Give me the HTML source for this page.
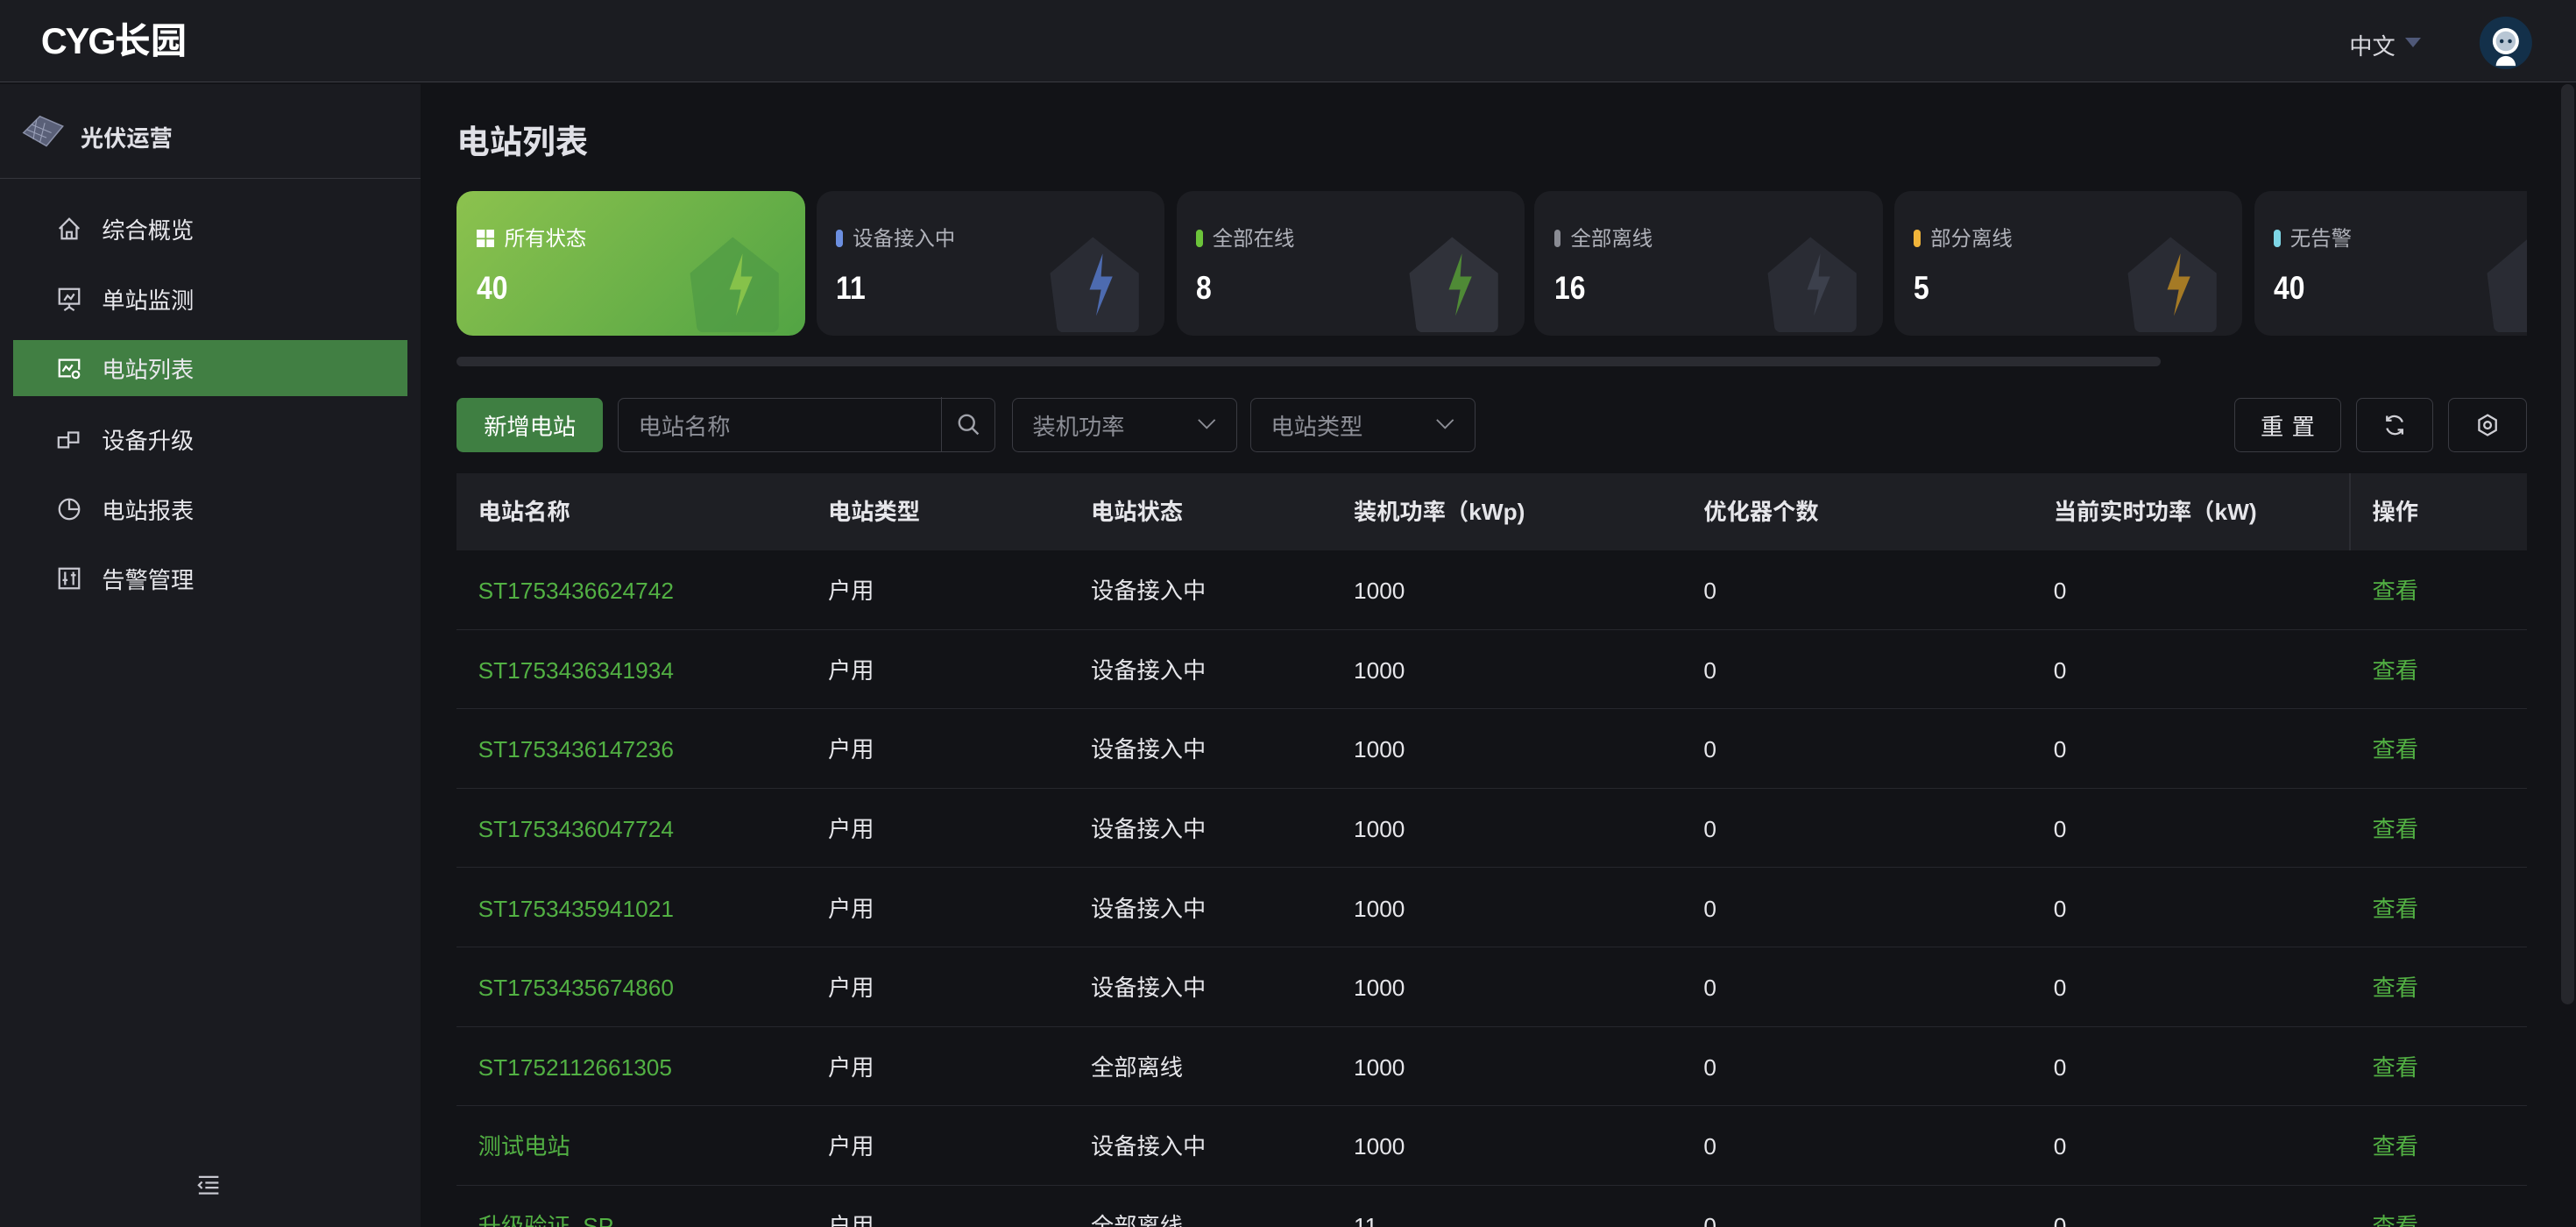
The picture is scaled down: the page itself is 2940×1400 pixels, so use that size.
<!DOCTYPE html>
<html><head><meta charset="utf-8"><style>
*{margin:0;padding:0;box-sizing:border-box}
html,body{width:2940px;height:1400px;overflow:hidden;background:#121317}
#r{zoom:1.875;width:1568px;height:747px;position:relative;font-family:"Liberation Sans","Noto Sans CJK SC",sans-serif;color:#e6e6ea;font-size:14px;background:#121317;overflow:hidden}
.a{position:absolute}
.top{left:0;top:0;width:1568px;height:50px;background:#1b1c21;border-bottom:1px solid #3b3c42}
.side{left:0;top:51px;width:256px;height:696px;background:#1a1b20}
.mi{left:34px;height:20px;display:flex;align-items:center;gap:12px;font-size:14px;color:#e8e8ec}
.card{top:116px;width:212px;height:88px;border-radius:10px;background:#1d1e23;overflow:hidden}
.card .l{position:absolute;left:12px;top:21px;font-size:12.5px;line-height:16px;color:#b0b2ba;display:flex;align-items:center;gap:6px}
.card .l i{display:inline-block;width:4px;height:11px;border-radius:2px}
.card .n{position:absolute;left:12px;top:47px;font-size:20px;line-height:24px;font-weight:bold;color:#fff;transform:scaleX(.85);transform-origin:left}
.card .hs{position:absolute;left:138px;top:24px}
.box{border:1px solid #3a3b42;border-radius:4px;height:33px;top:242px;display:flex;align-items:center;color:#8c8e96;font-size:14px}
.th{top:288px;left:278px;width:1260px;height:47px;background:#1e1f24}
.row{left:278px;width:1260px;height:48.3px;border-bottom:1px solid #26272d}
.c{position:absolute;font-size:14px;line-height:20px;height:20px;display:flex;align-items:center}
</style></head><body><div id="r">
<div class="a top">
 <div class="a" style="left:25px;top:11px;font-size:22px;line-height:28px;font-weight:bold;color:#fff;letter-spacing:-1px">CYG<span style="letter-spacing:0">长园</span></div>
 <div class="a" style="left:1430px;top:17px;font-size:14px;color:#d8d8de">中文</div>
 <div class="a" style="left:1464px;top:23px;width:0;height:0;border-left:5px solid transparent;border-right:5px solid transparent;border-top:6px solid #4f5878"></div>
 <svg class="a" style="left:1508px;top:9px" width="34" height="34" viewBox="0 0 34 34"><circle cx="17" cy="17" r="16" fill="#13304a"/><circle cx="17" cy="16" r="8" fill="#fff"/><ellipse cx="17" cy="16" rx="6" ry="6" fill="#b8c6d4"/><circle cx="14.5" cy="16" r="1.2" fill="#13304a"/><circle cx="19.5" cy="16" r="1.2" fill="#13304a"/><path d="M11 31a6 6 0 0 1 12 0z" fill="#fff"/></svg>
</div>
<div class="a side">
 <svg class="a" style="left:12px;top:18px" width="28" height="24" viewBox="0 0 28 24"><path d="M2 12L12 2l14 6-10 12z" fill="#5a6078" stroke="#8a90a8" stroke-width=".8"/><path d="M7 7l12 5M4 10l12 5M10 4l-2 12M15 6l-3 12" stroke="#9aa0b8" stroke-width=".6"/></svg>
 <div class="a" style="left:49px;top:22px;font-size:14px;font-weight:bold;color:#e0e0e6">光伏运营</div>
 <div class="a" style="left:0;top:57px;width:256px;height:1px;background:#34353b"></div>
 <div class="a" style="left:8px;top:156px;width:240px;height:34px;background:#417f43"></div>
 <div class="a mi" style="top:78px"><svg width="16" height="16" viewBox="0 0 16 16" fill="none" stroke="#c8c8d0" stroke-width="1.2"><path d="M2 8L8 2l6 6M3.5 7v7h9V7M6.5 14v-4h3v4"/></svg>综合概览</div>
 <div class="a mi" style="top:121px"><svg width="16" height="16" viewBox="0 0 16 16" fill="none" stroke="#c8c8d0" stroke-width="1.2"><rect x="2" y="2" width="12" height="9"/><path d="M5 9l2-3 2 2 2-3M8 11v2M5 15l3-2 3 2"/></svg>单站监测</div>
 <div class="a mi" style="top:163px"><svg width="16" height="16" viewBox="0 0 16 16" fill="none" stroke="#fff" stroke-width="1.2"><path d="M9 13H2V3h12v6"/><path d="M4 10l2-3 2 2 2-3"/><circle cx="12" cy="12" r="2"/></svg>电站列表</div>
 <div class="a mi" style="top:206px"><svg width="16" height="16" viewBox="0 0 16 16" fill="none" stroke="#c8c8d0" stroke-width="1.2"><rect x="1.5" y="7" width="6" height="6"/><rect x="7.5" y="4" width="6" height="6"/></svg>设备升级</div>
 <div class="a mi" style="top:249px"><svg width="16" height="16" viewBox="0 0 16 16" fill="none" stroke="#c8c8d0" stroke-width="1.2"><circle cx="8" cy="8" r="6"/><path d="M8 2v6h6"/></svg>电站报表</div>
 <div class="a mi" style="top:291px"><svg width="16" height="16" viewBox="0 0 16 16" fill="none" stroke="#c8c8d0" stroke-width="1.2"><rect x="2" y="2" width="12" height="12"/><path d="M5.5 4v8M10.5 4v8M4 9h3M9 6h3"/></svg>告警管理</div>
 <svg class="a" style="left:120px;top:664px" width="14" height="12" viewBox="0 0 14 12" stroke="#c8c8d0" stroke-width="1.2"><path d="M1 1h12M5 4.5h8M5 7.5h8M1 11h12"/><path d="M3 4L1 6l2 2" fill="none"/></svg>
</div>
<div class="a" style="left:278px;top:70px;font-size:20px;font-weight:bold;color:#e0e0e6">电站列表</div>

<div class="a card" style="left:278px;background:linear-gradient(135deg,#8cc24e,#52a444)">
 <div class="l" style="color:#fff"><svg width="11" height="11" viewBox="0 0 11 11" fill="#fff"><rect width="5" height="5"/><rect x="6" width="5" height="5"/><rect y="6" width="5" height="5"/><rect x="6" y="6" width="5" height="5"/></svg>所有状态</div>
 <div class="n">40</div>
 <svg class="hs" width="64" height="62" viewBox="0 0 64 62"><path d="M4 26L30 4l28 22v32a4 4 0 0 1-4 4H12a4 4 0 0 1-4-4z" fill="#4f9a44" opacity=".7"/><path d="M36 14l-8 22h7l-3 16 10-24h-7z" fill="#86c24a"/></svg>
</div>
<div class="a card" style="left:497px"><div class="l"><i style="background:#6c8fe0"></i>设备接入中</div><div class="n">11</div><svg class="hs" width="64" height="62" viewBox="0 0 64 62"><path d="M4 26L30 4l28 22v32a4 4 0 0 1-4 4H12a4 4 0 0 1-4-4z" fill="#2a2c34"/><path d="M36 14l-8 22h7l-3 16 10-24h-7z" fill="#4d6bb0"/></svg></div>
<div class="a card" style="left:716px"><div class="l"><i style="background:#6cc43a"></i>全部在线</div><div class="n">8</div><svg class="hs" width="64" height="62" viewBox="0 0 64 62"><path d="M4 26L30 4l28 22v32a4 4 0 0 1-4 4H12a4 4 0 0 1-4-4z" fill="#30323a"/><path d="M36 14l-8 22h7l-3 16 10-24h-7z" fill="#4f8a36"/></svg></div>
<div class="a card" style="left:934px"><div class="l"><i style="background:#8a8c94"></i>全部离线</div><div class="n">16</div><svg class="hs" width="64" height="62" viewBox="0 0 64 62"><path d="M4 26L30 4l28 22v32a4 4 0 0 1-4 4H12a4 4 0 0 1-4-4z" fill="#2a2c34"/><path d="M36 14l-8 22h7l-3 16 10-24h-7z" fill="#3c404c"/></svg></div>
<div class="a card" style="left:1153px"><div class="l"><i style="background:#f0b43a"></i>部分离线</div><div class="n">5</div><svg class="hs" width="64" height="62" viewBox="0 0 64 62"><path d="M4 26L30 4l28 22v32a4 4 0 0 1-4 4H12a4 4 0 0 1-4-4z" fill="#2a2c34"/><path d="M36 14l-8 22h7l-3 16 10-24h-7z" fill="#a57a25"/></svg></div>
<div class="a card" style="left:1372px;width:166px;border-radius:10px 0 0 10px"><div class="l"><i style="background:#7ed6e6"></i>无告警</div><div class="n">40</div><svg class="hs" width="64" height="62" viewBox="0 0 64 62"><path d="M4 26L30 4l28 22v32a4 4 0 0 1-4 4H12a4 4 0 0 1-4-4z" fill="#2a2c34"/></svg></div>
<div class="a" style="left:278px;top:217px;width:1037px;height:6px;border-radius:3px;background:#2a2b31"></div>

<div class="a" style="left:278px;top:242px;width:89px;height:33px;border-radius:4px;background:#3f7f42;color:#fff;font-size:14px;display:flex;align-items:center;justify-content:center">新增电站</div>
<div class="a box" style="left:376px;width:230px;padding-left:12px">电站名称<div class="a" style="left:196px;top:-1px;width:33px;height:33px;border-left:1px solid #3a3b42;display:flex;align-items:center;justify-content:center"><svg width="14" height="14" viewBox="0 0 14 14" fill="none" stroke="#a0a2aa" stroke-width="1.3"><circle cx="6" cy="6" r="4.5"/><path d="M9.3 9.3L13 13"/></svg></div></div>
<div class="a box" style="left:616px;width:137px;padding-left:12px">装机功率<svg class="a" style="left:112px;top:12px" width="12" height="8" viewBox="0 0 12 8" fill="none" stroke="#8c8e96"><path d="M1 1l5 5 5-5"/></svg></div>
<div class="a box" style="left:761px;width:137px;padding-left:12px">电站类型<svg class="a" style="left:112px;top:12px" width="12" height="8" viewBox="0 0 12 8" fill="none" stroke="#8c8e96"><path d="M1 1l5 5 5-5"/></svg></div>
<div class="a box" style="left:1360px;width:65px;justify-content:center;color:#e8e8ec;letter-spacing:5px;padding-left:5px">重置</div>
<div class="a box" style="left:1434px;width:47px;justify-content:center"><svg width="15" height="15" viewBox="0 0 16 16" fill="none" stroke="#d0d0d6" stroke-width="1.3"><path d="M13 6a5.5 5.5 0 0 0-10-1M3 10a5.5 5.5 0 0 0 10 1M3 2v3h3M13 14v-3h-3"/></svg></div>
<div class="a box" style="left:1490px;width:48px;justify-content:center"><svg width="15" height="15" viewBox="0 0 16 16" fill="none" stroke="#d0d0d6" stroke-width="1.3"><path d="M8 1.5l5.5 3.2v6.6L8 14.5l-5.5-3.2V4.7z"/><circle cx="8" cy="8" r="2.2"/></svg></div>

<div class="a th">
 <div class="a" style="left:1152px;top:0;width:1px;height:47px;background:#2c2d33"></div>
 <div class="c" style="left:13px;top:14px;font-weight:bold">电站名称</div>
 <div class="c" style="left:226px;top:14px;font-weight:bold">电站类型</div>
 <div class="c" style="left:386px;top:14px;font-weight:bold">电站状态</div>
 <div class="c" style="left:546px;top:14px;font-weight:bold">装机功率（kWp)</div>
 <div class="c" style="left:759px;top:14px;font-weight:bold">优化器个数</div>
 <div class="c" style="left:972px;top:14px;font-weight:bold">当前实时功率（kW)</div>
 <div class="c" style="left:1166px;top:14px;font-weight:bold">操作</div>
</div>
<div id="rows"></div>
<div class="a" style="left:1559px;top:51px;width:8px;height:560px;border-radius:4px;background:#26272c"></div>
<script>
var d=[["ST1753436624742","设备接入中","1000"],["ST1753436341934","设备接入中","1000"],["ST1753436147236","设备接入中","1000"],["ST1753436047724","设备接入中","1000"],["ST1753435941021","设备接入中","1000"],["ST1753435674860","设备接入中","1000"],["ST1752112661305","全部离线","1000"],["测试电站","设备接入中","1000"],["升级验证_SP","全部离线","11"]];
var h="";d.forEach(function(r,i){var t=335+i*48.3;h+='<div class="a row" style="top:'+t+'px"><div class="c" style="left:13px;top:15px;color:#52b043">'+r[0]+'</div><div class="c" style="left:226px;top:15px">户用</div><div class="c" style="left:386px;top:15px">'+r[1]+'</div><div class="c" style="left:546px;top:15px">'+r[2]+'</div><div class="c" style="left:759px;top:15px">0</div><div class="c" style="left:972px;top:15px">0</div><div class="c" style="left:1166px;top:15px;color:#52b043">查看</div></div>'});
document.getElementById("rows").outerHTML=h;
</script>
</div></body></html>
